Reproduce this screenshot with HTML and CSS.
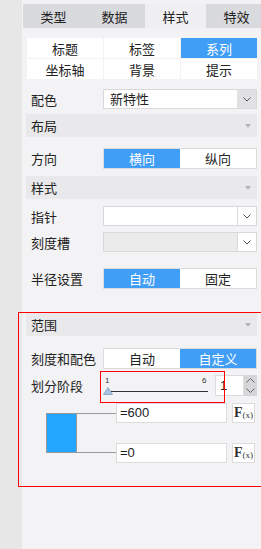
FILE: index.html
```html
<!DOCTYPE html>
<html lang="zh">
<head>
    <meta charset="UTF-8">
    <title>样式设置</title>
    <link rel="stylesheet" href="styles.css">
</head>
<body>
    <div class="app">
        <div class="side"></div>
        <div class="panel">
            <!-- Pestañas principales -->
            <div class="tabs">
                <div class="tab">类型</div>
                <div class="tab">数据</div>
                <div class="tab active">样式</div>
                <div class="tab">特效</div>
            </div>

            <div class="content">
                <div class="subtabs">
                    <div class="subtab">标题</div>
                    <div class="subtab">标签</div>
                    <div class="subtab on">系列</div>
                    <div class="subtab">坐标轴</div>
                    <div class="subtab">背景</div>
                    <div class="subtab">提示</div>
                </div>

                <div class="field gap-10">
                    <div class="field-label">配色</div>
                    <div class="select">
                        <div class="select-value">新特性</div>
                        <div class="select-btn gray">
                            <svg width="8" height="5" viewBox="0 0 8 5"><polyline points="0.5,0.5 4,4 7.5,0.5" fill="none" stroke="#555" stroke-width="1"/></svg>
                        </div>
                    </div>
                </div>

                <div class="group-head gap-5">布局<span class="caret"></span></div>

                <div class="field gap-11">
                    <div class="field-label">方向</div>
                    <div class="toggle">
                        <span class="on">横向</span>
                        <span>纵向</span>
                    </div>
                </div>

                <div class="group-head gap-7">样式<span class="caret"></span></div>

                <div class="field gap-7">
                    <div class="field-label">指针</div>
                    <div class="select">
                        <div class="select-value"></div>
                        <div class="select-btn">
                            <svg width="8" height="5" viewBox="0 0 8 5"><polyline points="0.5,0.5 4,4 7.5,0.5" fill="none" stroke="#555" stroke-width="1"/></svg>
                        </div>
                    </div>
                </div>

                <div class="field gap-6">
                    <div class="field-label">刻度槽</div>
                    <div class="select disabled">
                        <div class="select-value"></div>
                        <div class="select-btn">
                            <svg width="8" height="5" viewBox="0 0 8 5"><polyline points="0.5,0.5 4,4 7.5,0.5" fill="none" stroke="#555" stroke-width="1"/></svg>
                        </div>
                    </div>
                </div>

                <div class="field gap-16">
                    <div class="field-label">半径设置</div>
                    <div class="toggle">
                        <span class="on">自动</span>
                        <span>固定</span>
                    </div>
                </div>

                <!-- Sección de rango -->
                <div class="range">
                    <div class="group-head">范围<span class="caret"></span></div>

                    <div class="field gap-12">
                        <div class="field-label">刻度和配色</div>
                        <div class="toggle">
                            <span>自动</span>
                            <span class="on">自定义</span>
                        </div>
                    </div>

                    <div class="field gap-6 steps">
                        <div class="field-label">划分阶段</div>
                        <div class="slider">
                            <span class="tick tick-min">1</span>
                            <span class="tick tick-max">6</span>
                            <div class="slider-line"></div>
                            <svg class="thumb" width="10" height="8" viewBox="0 0 10 8"><polygon points="5,0.5 9.5,7.5 0.5,7.5" fill="#aac3df" stroke="#8eaacb" stroke-width="1"/></svg>
                            <div class="mark"></div>
                        </div>
                        <div class="num">1</div>
                        <div class="spin">
                            <svg width="9" height="5" viewBox="0 0 9 5"><polyline points="0.5,4.5 4.5,0.5 8.5,4.5" fill="none" stroke="#666" stroke-width="1"/></svg>
                            <svg width="9" height="5" viewBox="0 0 9 5"><polyline points="0.5,0.5 4.5,4.5 8.5,0.5" fill="none" stroke="#666" stroke-width="1"/></svg>
                        </div>
                    </div>

                    <div class="stops">
                        <div class="swatch"></div>
                        <div class="bracket"></div>
                        <div class="stop-inputs">
                            <div class="stop-input">=600</div>
                            <div class="stop-input">=0</div>
                        </div>
                        <div class="stop-fx">
                            <div class="fx">F<small>(x)</small></div>
                            <div class="fx">F<small>(x)</small></div>
                        </div>
                    </div>
                </div>
            </div>
        </div>
    </div>
</body>
</html>
```

FILE: styles.css
```css
/* Estilos globales */
html, body {
    margin: 0;
    height: 100%;
    overflow: hidden;
}

body {
    font-family: "Noto Sans CJK SC", "Noto Sans", sans-serif;
    font-size: 12px;
    color: #222;
    background: #f3f3f5;
}

.app {
    display: flex;
    height: 549px;
}

.side {
    width: 22px;
    flex: none;
    background: #e7e7e7;
}

.panel {
    flex: 1;
    min-width: 0;
}

/* Pestañas */
.tabs {
    display: flex;
    margin: 4px 0 0 1px;
    height: 24px;
}

.tab {
    flex: none;
    width: 61px;
    background: #d9dadd;
    display: flex;
    align-items: center;
    justify-content: center;
    font-size: 13px;
    padding-top: 1px;
    box-sizing: border-box;
}

.tab.active {
    background: #f0f0f2;
}

.content {
    padding: 0 4px;
}

.subtabs {
    display: grid;
    grid-template-columns: repeat(3, 1fr);
    gap: 1px;
    margin: 10px 0 0 1px;
}

.subtab {
    height: 20px;
    background: #fff;
    display: flex;
    align-items: center;
    justify-content: center;
    font-size: 13px;
}

.subtab.on {
    background: #419ef6;
    color: #fff;
}

/* Filas */
.field {
    display: flex;
    align-items: center;
}

.field-label {
    width: 77px;
    flex: none;
    padding-left: 5px;
    box-sizing: border-box;
    font-size: 13px;
}

.gap-5 { margin-top: 5px; }
.gap-6 { margin-top: 6px; }
.gap-7 { margin-top: 7px; }
.gap-10 { margin-top: 10px; }
.gap-11 { margin-top: 11px; }
.gap-12 { margin-top: 12px; }
.gap-16 { margin-top: 16px; }

.select {
    flex: 1;
    display: flex;
    height: 20px;
    border: 1px solid #d9d9d9;
    background: #fff;
    box-sizing: border-box;
}

.select.disabled {
    background: #ebebeb;
}

.select-value {
    flex: 1;
    padding-left: 6px;
    line-height: 18px;
    font-size: 13px;
}

.select-btn {
    width: 18px;
    border-left: 1px solid #d9d9d9;
    background: #fff;
    display: flex;
    align-items: center;
    justify-content: center;
}

.select-btn.gray {
    background: #e1e1e3;
    border-left-color: #e1e1e3;
}

.toggle {
    flex: 1;
    display: flex;
    height: 21px;
    border: 1px solid #dcdcdc;
    background: #fff;
    box-sizing: border-box;
}

.toggle span {
    flex: 1;
    display: flex;
    align-items: center;
    justify-content: center;
    font-size: 13px;
}

.toggle span.on {
    background: #419ef6;
    color: #fff;
}

.group-head {
    height: 23px;
    background: #e9e9eb;
    display: flex;
    align-items: center;
    justify-content: space-between;
    padding: 0 6px 0 5px;
    font-size: 13px;
}

.caret {
    width: 0;
    height: 0;
    border-left: 3.5px solid transparent;
    border-right: 3.5px solid transparent;
    border-top: 4px solid #b3b3b5;
}

/* Rango */
.range {
    border: 1px solid #ff0000;
    margin: 23px -6px 0 -8px;
    padding: 0 5px 23px 7px;
}

.steps {
    height: 21px;
}

.slider {
    position: relative;
    width: 110px;
    height: 21px;
    flex: none;
}

.tick {
    position: absolute;
    top: 1px;
    font-family: "Liberation Sans", sans-serif;
    font-size: 8px;
    line-height: 10px;
    color: #333;
}

.tick-min { left: 2px; }
.tick-max { left: 99px; }

.slider-line {
    position: absolute;
    left: 3px;
    top: 16px;
    width: 102px;
    height: 1px;
    background: #333;
}

.thumb {
    position: absolute;
    left: 0;
    top: 12px;
}

.mark {
    position: absolute;
    left: -3px;
    top: -4px;
    width: 125px;
    height: 32px;
    border: 1px solid #ff0000;
    box-sizing: border-box;
}

.num {
    width: 29px;
    height: 21px;
    margin-left: 2px;
    border: 1px solid #dcdcdc;
    background: #fff;
    box-sizing: border-box;
    padding-left: 4px;
    font-family: "Liberation Sans", sans-serif;
    font-size: 13px;
    line-height: 19px;
}

.spin {
    width: 13px;
    height: 21px;
    background: #d6d6d8;
    display: flex;
    flex-direction: column;
    align-items: center;
    justify-content: space-around;
}

.stops {
    display: flex;
    margin-top: 7px;
    padding-left: 20px;
}

.swatch {
    width: 31px;
    height: 40px;
    margin-top: 10px;
    border: 1px solid #999;
    background: #22a6ff;
    box-sizing: border-box;
}

.bracket {
    width: 39px;
    height: 40px;
    margin-top: 10px;
    border-top: 1px solid #9a9a9a;
    border-bottom: 1px solid #9a9a9a;
    box-sizing: border-box;
}

.stop-inputs,
.stop-fx {
    display: flex;
    flex-direction: column;
    gap: 20px;
}

.stop-input {
    width: 111px;
    height: 20px;
    border: 1px solid #dcdcdc;
    background: #fff;
    box-sizing: border-box;
    padding-left: 3px;
    font-family: "Liberation Sans", sans-serif;
    font-size: 13px;
    line-height: 18px;
}

.stop-fx {
    margin-left: 5px;
}

.fx {
    width: 23px;
    height: 20px;
    border: 1px solid #dcdcdc;
    background: #fff;
    box-sizing: border-box;
    display: flex;
    align-items: center;
    justify-content: center;
    font-family: "Liberation Serif", serif;
    font-weight: bold;
    font-size: 14px;
    color: #333;
}

.fx small {
    font-size: 9px;
    font-weight: normal;
    margin-top: 3px;
}
```
